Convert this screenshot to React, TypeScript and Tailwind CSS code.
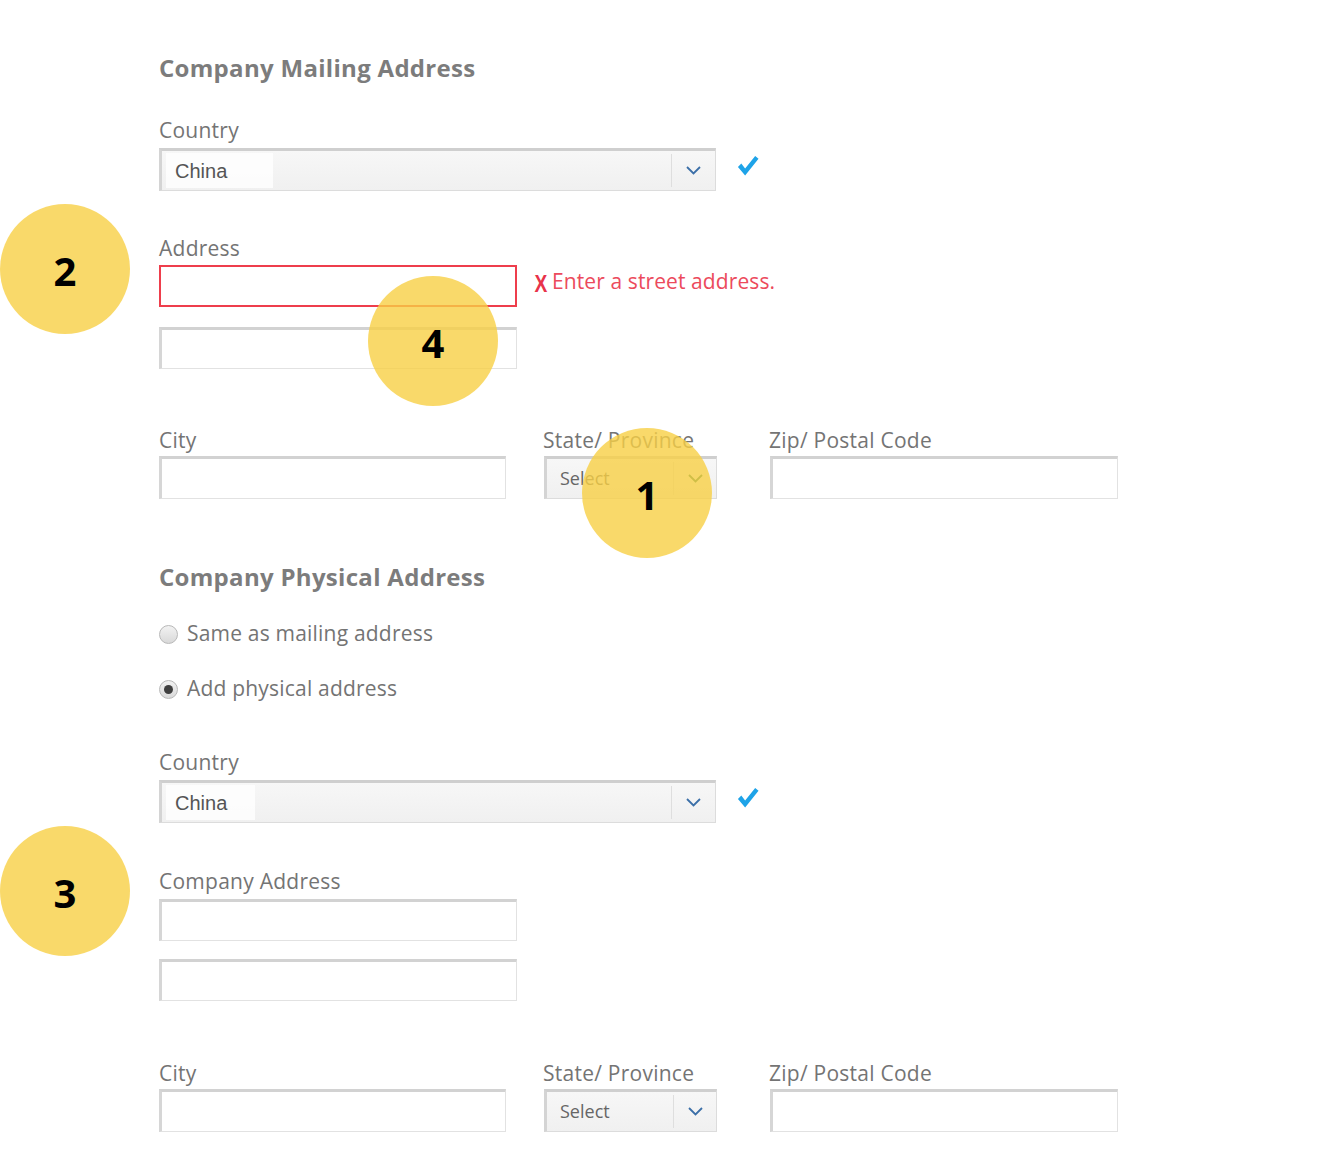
import React from "react";

const SANS = "font-['Open_Sans',sans-serif]";

function Chevron({ color = "#3b6fa8" }: { color?: string }) {
  return (
    <svg width="15" height="9" viewBox="0 0 15 9" fill="none">
      <polyline points="1,1 7.5,7.5 14,1" stroke={color} strokeWidth="1.8" fill="none" />
    </svg>
  );
}

function Check() {
  return (
    <svg width="22" height="22" viewBox="0 0 23 22">
      <polygon points="1,12 4.5,8.5 8.5,13.5 19,0.5 22.5,3.5 8.5,21" fill="#1ea3e8" />
    </svg>
  );
}

function Label({ children, className = "" }: { children: React.ReactNode; className?: string }) {
  return (
    <div
      className={`${SANS} h-[24px] leading-[24px] text-[21px] tracking-[0.25px] text-[#747474] whitespace-nowrap ${className}`}
    >
      {children}
    </div>
  );
}

function TextInput({ w, h = 42, error = false, className = "" }: { w: string; h?: number; error?: boolean; className?: string }) {
  const size = h === 43 ? "h-[43px]" : "h-[42px]";
  return (
    <div
      className={`${w} ${size} bg-white ${
        error
          ? "border-2 border-[#ee3e4c]"
          : "border border-[#e2e2e2] border-t-[3px] border-l-[3px] border-t-[#d2d2d2] border-l-[#d6d6d6]"
      } ${className}`}
    />
  );
}

function Select({ w, text, wide = true, patch = "", chevronColor }: { w: string; text: string; wide?: boolean; patch?: string; chevronColor?: string }) {
  return (
    <div
      className={`${w} h-[43px] flex items-stretch border border-[#dcdcdc] border-t-[3px] border-l-[3px] border-t-[#cfcfcf] border-l-[#d4d4d4] bg-gradient-to-b from-[#f7f7f7] to-[#f0f0f0]`}
    >
      <div className="flex-1 flex items-center pl-[4px] py-[2px]">
        <div
          className={`h-full flex items-center ${
            wide
              ? "pl-[9px] text-[20px] font-['Liberation_Sans',Arial,sans-serif] text-[#555]"
              : `pl-[9px] text-[18px] ${SANS} text-[#666]`
          } ${patch}`}
        >
          {text}
        </div>
      </div>
      <div className="w-px my-[3px] bg-[#dedede]" />
      <div className={`${wide ? "w-[43px]" : "w-[42px]"} flex items-center justify-center`}>
        <Chevron color={chevronColor} />
      </div>
    </div>
  );
}

function Radio({ checked, label }: { checked: boolean; label: string }) {
  return (
    <div className="flex items-center h-[28px]">
      <div className="w-[19px] h-[19px] rounded-full border border-[#b8b8b8] bg-gradient-to-b from-[#f2f2f2] to-[#d9d9d9] flex items-center justify-center">
        {checked && <div className="w-[9px] h-[9px] rounded-full bg-[#3f3f3f]" />}
      </div>
      <span className={`${SANS} ml-[9px] text-[21px] tracking-[0.2px] text-[#747474]`}>{label}</span>
    </div>
  );
}

function Bubble({ n, className }: { n: string; className: string }) {
  return (
    <div
      className={`absolute w-[130px] h-[130px] rounded-full bg-[#f8d045]/80 flex items-center justify-center ${className}`}
    >
      <span className={`${SANS} font-bold text-[40px] text-black leading-none mt-[4px]`}>{n}</span>
    </div>
  );
}

function CityRow({ stateChevron }: { stateChevron?: string }) {
  return (
    <div className="flex">
      <div className="flex flex-col">
        <Label>City</Label>
        <TextInput w="w-[347px]" h={43} className="mt-[4px]" />
      </div>
      <div className="flex flex-col ml-[38px]">
        <Label className="-ml-px">State/ Province</Label>
        <div className="mt-[4px]">
          <Select w="w-[173px]" text="Select" wide={false} chevronColor={stateChevron} />
        </div>
      </div>
      <div className="flex flex-col ml-[53px]">
        <Label className="-ml-px">Zip/ Postal Code</Label>
        <TextInput w="w-[348px]" h={43} className="mt-[4px]" />
      </div>
    </div>
  );
}

export default function App() {
  return (
    <div className="relative w-[1340px] h-[1166px] bg-white overflow-hidden">
      <div className="flex flex-col pl-[159px] pt-[52px]">
        <h2 className={`${SANS} h-[32px] leading-[32px] font-bold text-[24px] tracking-[0.3px] text-[#7c7c7c]`}>
          Company Mailing Address
        </h2>

        <Label className="mt-[34px]">Country</Label>
        <div className="flex items-center mt-[6px]">
          <Select w="w-[557px]" text="China" patch="bg-white/80 pr-[46px]" />
          <div className="ml-[21px] -mt-[8px]">
            <Check />
          </div>
        </div>

        <Label className="mt-[45px]">Address</Label>
        <div className="flex items-center mt-[5px]">
          <TextInput w="w-[358px]" error />
          <span className="ml-[16px] -mt-[5px] font-['Liberation_Sans',Arial,sans-serif] font-bold text-[24px] text-[#e8334a] leading-none scale-x-[0.8]">
            X
          </span>
          <span className={`${SANS} ml-[3px] -mt-[8px] text-[21px] tracking-[0.1px] text-[#ec4a5c]`}>
            Enter a street address.
          </span>
        </div>
        <TextInput w="w-[358px]" className="mt-[20px]" />

        <div className="mt-[59px]">
          <CityRow stateChevron="#2f7a4a" />
        </div>

        <h2 className={`${SANS} mt-[62px] h-[32px] leading-[32px] font-bold text-[24px] tracking-[0.3px] text-[#7c7c7c]`}>
          Company Physical Address
        </h2>

        <div className="mt-[27px]">
          <Radio checked={false} label="Same as mailing address" />
        </div>
        <div className="mt-[27px]">
          <Radio checked label="Add physical address" />
        </div>

        <Label className="mt-[47px]">Country</Label>
        <div className="flex items-center mt-[6px]">
          <Select w="w-[557px]" text="China" patch="bg-white/80 pr-[28px]" />
          <div className="ml-[21px] -mt-[8px]">
            <Check />
          </div>
        </div>

        <Label className="mt-[46px]">Company Address</Label>
        <TextInput w="w-[358px]" className="mt-[6px]" />
        <TextInput w="w-[358px]" className="mt-[18px]" />

        <div className="mt-[60px]">
          <CityRow />
        </div>
      </div>

      <Bubble n="2" className="left-0 top-[204px]" />
      <Bubble n="4" className="left-[368px] top-[276px]" />
      <Bubble n="1" className="left-[582px] top-[428px]" />
      <Bubble n="3" className="left-0 top-[826px]" />
    </div>
  );
}
